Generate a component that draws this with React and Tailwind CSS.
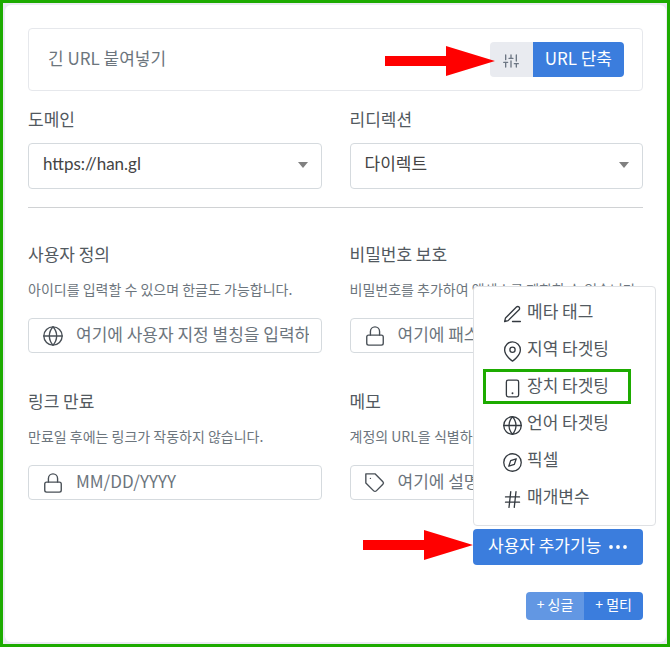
import { useState } from 'react'
import { FiCompass, FiEdit3, FiGlobe, FiHash, FiLock, FiMapPin, FiSliders, FiTag } from 'react-icons/fi'

const FEATURES = [
  { id: 'meta', label: '메타 태그', icon: FiEdit3 },
  { id: 'geo', label: '지역 타겟팅', icon: FiMapPin },
  { id: 'device', label: '장치 타겟팅', icon: DeviceIcon },
  { id: 'language', label: '언어 타겟팅', icon: FiGlobe },
  { id: 'pixel', label: '픽셀', icon: FiCompass },
  { id: 'params', label: '매개변수', icon: FiHash },
]

function DeviceIcon({ size, strokeWidth, className }) {
  return (
    <svg width={size} height={size} viewBox="0 0 24 24" fill="none" stroke="currentColor" strokeWidth={strokeWidth} className={className} aria-hidden="true">
      <rect x="5" y="2.5" width="14" height="19" rx="2" />
      <circle cx="12" cy="17.5" r="1.1" fill="currentColor" stroke="none" />
    </svg>
  )
}

function Arrow({ className }) {
  return (
    <svg viewBox="0 0 110 30" className={`pointer-events-none absolute h-[30px] w-[110px] max-w-none ${className}`} aria-hidden="true">
      <path d="M0 10H61V0L110 15L61 30V20H0Z" fill="#ff0000" />
    </svg>
  )
}

function SelectField({ id, label, options }) {
  return (
    <div className="min-w-0">
      <label htmlFor={id} className="block text-[17px] leading-6 text-[#525960]">{label}</label>
      <div className="relative mt-3">
        <select id={id} className="h-[46px] w-full appearance-none rounded border border-[#d5dade] bg-white pb-1 pl-[14px] pr-8 font-['Lato','Noto_Sans_CJK_KR',sans-serif] text-[17px] text-[#444]">
          {options.map(o => <option key={o}>{o}</option>)}
        </select>
        <svg viewBox="0 0 10 6" className="pointer-events-none absolute right-[14px] top-[19px] h-[6px] w-[10px]" aria-hidden="true">
          <path d="M0 0H10L5 6Z" fill="#808080" />
        </svg>
      </div>
    </div>
  )
}

function TextField({ id, label, help, placeholder, icon: Icon, type = 'text' }) {
  return (
    <div className="min-w-0">
      <label htmlFor={id} className="block text-[17px] leading-6 text-[#525960]">{label}</label>
      <p className="mt-[11px] overflow-hidden whitespace-nowrap text-[14px] leading-6 text-[#6c757d]">{help}</p>
      <div className="mt-[17px] flex h-[35px] items-center rounded border border-[#d5dade] bg-white pl-[13px] pr-3">
        <Icon size={22} strokeWidth={1.5} className="shrink-0 text-[#495057]" />
        <input id={id} type={type} placeholder={placeholder} className="ml-3 h-8 min-w-0 flex-1 pb-1 text-[17px] text-[#495057] outline-none placeholder:text-[#6c757d]" />
      </div>
    </div>
  )
}

export default function App() {
  const [open, setOpen] = useState(true)
  const [active, setActive] = useState('device')
  const [url, setUrl] = useState('')

  return (
    <div className="flex min-h-screen flex-col border-[3px] border-[#1dab00] bg-[#ebebf3] py-[2px] pl-[2px] pr-px font-['Noto_Sans_CJK_KR',sans-serif]">
      <main className="flex-1 rounded-md bg-white px-[23px] pb-[22px] pt-[23px]">
        <div className="flex h-[63px] items-center rounded border border-[#e6e8ec] pl-[19px] pr-[18px]">
          <input aria-label="긴 URL" value={url} onChange={e => setUrl(e.target.value)} placeholder="긴 URL 붙여넣기" className="h-9 min-w-0 flex-1 pb-1 text-[17px] outline-none placeholder:text-[#6c757d]" />
          <div className="relative flex h-[35px] shrink-0">
            <button aria-label="옵션" className="flex w-[43px] items-center justify-center rounded-l bg-[#e9ebf0] pt-[2px] text-[#6c7683]">
              <FiSliders size={16} strokeWidth={2} />
            </button>
            <button className="rounded-r bg-[#3b7ddd] px-3 pb-1 text-[17px] text-white">URL 단축</button>
            <Arrow className="right-full top-1 -mr-[5px]" />
          </div>
        </div>

        <div className="mt-4 grid grid-cols-2 gap-7">
          <SelectField id="domain" label="도메인" options={['https://han.gl']} />
          <SelectField id="redirect" label="리디렉션" options={['다이렉트']} />
        </div>

        <hr className="mt-[18px] border-[#d0d2d4]" />

        <div className="mt-[34px] grid grid-cols-2 gap-x-7 gap-y-9">
          <TextField id="alias" label="사용자 정의" help="아이디를 입력할 수 있으며 한글도 가능합니다." placeholder="여기에 사용자 지정 별칭을 입력하세요" icon={FiGlobe} />
          <TextField id="password" type="password" label="비밀번호 보호" help="비밀번호를 추가하여 액세스를 제한할 수 있습니다." placeholder="여기에 패스워드를 입력하세요" icon={FiLock} />
          <TextField id="expiry" label="링크 만료" help="만료일 후에는 링크가 작동하지 않습니다." placeholder="MM/DD/YYYY" icon={FiLock} />
          <TextField id="memo" label="메모" help="계정의 URL을 식별하는 메모" placeholder="여기에 설명을 입력하세요" icon={FiTag} />
        </div>

        <div className="mt-[29px] flex justify-end">
          <div className="relative">
            <button onClick={() => setOpen(!open)} aria-expanded={open} className="flex h-9 w-[170px] items-center rounded bg-[#3b7ddd] pb-1 pl-[15px] text-[17px] text-white">
              사용자 추가기능
              <svg viewBox="0 0 18 4" className="ml-2 mt-1 h-1 w-[18px]" fill="currentColor" aria-hidden="true">
                <circle cx="2" cy="2" r="1.9" />
                <circle cx="9" cy="2" r="1.9" />
                <circle cx="16" cy="2" r="1.9" />
              </svg>
            </button>
            {open && (
              <div className="absolute -right-[13px] bottom-full mb-[3px] flex w-[183px] flex-col gap-[2px] rounded border border-[#dfe1e4] bg-white px-[9px] pb-[10px] pt-2">
                {FEATURES.map(({ id, label, icon: Icon }) => (
                  <button
                    key={id}
                    onClick={() => setActive(id)}
                    className={`flex h-[35px] w-[148px] items-center border-[3px] pl-4 text-left text-[17px] text-[#525960] ${active === id ? 'border-[#1dab00]' : 'border-transparent'}`}
                  >
                    <Icon size={21} strokeWidth={1.5} className="mt-1 shrink-0 text-[#343a40]" />
                    <span className="ml-1 pb-1">{label}</span>
                  </button>
                ))}
              </div>
            )}
            <Arrow className="right-full top-px" />
          </div>
        </div>

        <div className="mt-[27px] flex justify-end text-[14px] leading-5 text-white">
          <button className="h-7 rounded-l-sm bg-[#6297e3] px-[11px] pb-1">+ 싱글</button>
          <button className="h-7 rounded-r-sm bg-[#3b7ddd] px-[11px] pb-1">+ 멀티</button>
        </div>
      </main>
    </div>
  )
}
